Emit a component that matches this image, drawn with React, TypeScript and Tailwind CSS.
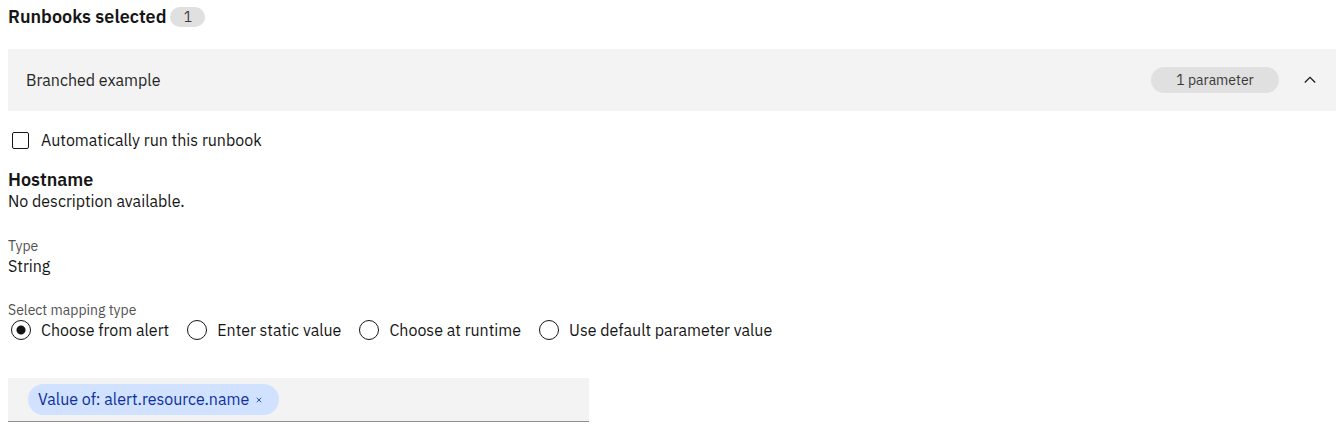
import { useState } from "react";

const mappingTypes = [
  "Choose from alert",
  "Enter static value",
  "Choose at runtime",
  "Use default parameter value",
];

function RadioOption({
  label,
  checked,
  onSelect,
}: {
  label: string;
  checked: boolean;
  onSelect: () => void;
}) {
  return (
    <label className="flex items-center gap-2.5">
      <input
        type="radio"
        name="mapping-type"
        checked={checked}
        onChange={onSelect}
        className="size-5 appearance-none rounded-full border border-[#161616] checked:bg-[radial-gradient(circle,#161616_4px,transparent_5px)]"
      />
      {label}
    </label>
  );
}

function SelectedTag({ text, onRemove }: { text: string; onRemove: () => void }) {
  return (
    <span className="flex h-[31px] items-center gap-1.5 rounded-full bg-[#d0e2ff] pr-4 pl-2.5 text-[#0f2f9e]">
      <span className="pb-0.5">{text}</span>
      <button type="button" aria-label="Remove value" onClick={onRemove}>
        <svg viewBox="0 0 8 8" className="size-2" fill="none" stroke="currentColor" strokeWidth="0.8">
          <path d="M1.75 1.75 6.25 6.25M6.25 1.75 1.75 6.25" />
        </svg>
      </button>
    </span>
  );
}

export default function App() {
  const [expanded, setExpanded] = useState(true);
  const [mapping, setMapping] = useState(mappingTypes[0]);
  const [hasValue, setHasValue] = useState(true);

  return (
    <main className="bg-white px-2 pt-1 font-['IBM_Plex_Sans',Roboto,sans-serif] text-base leading-5 text-[#161616]">
      <header className="flex items-center gap-1">
        <h1 className="text-lg leading-[26px] font-semibold">Runbooks selected</h1>
        <span className="flex h-5 w-[35px] items-center justify-center rounded-full bg-[#e0e0e0] text-sm text-[#393939]">
          1
        </span>
      </header>

      <section className="mt-[19px]">
        <div className="flex h-[62px] items-center bg-[#f3f3f3] pr-4 pl-[18px]">
          <h2 className="flex-1 text-[#262626]">Branched example</h2>
          <span className="flex h-[26px] w-32 items-center justify-center rounded-full bg-[#e0e0e0] text-sm text-[#393939]">
            1 parameter
          </span>
          <button
            type="button"
            aria-label="Toggle runbook details"
            aria-expanded={expanded}
            onClick={() => setExpanded(!expanded)}
            className="ml-[21px]"
          >
            <svg viewBox="0 0 20 20" className="size-5" fill="none" stroke="#161616" strokeWidth="1.2">
              <path d={expanded ? "M4.8 12.5 10 7.3l5.2 5.2" : "M4.8 7.5 10 12.7l5.2-5.2"} />
            </svg>
          </button>
        </div>

        {expanded && (
          <div>
            <label className="mt-[19px] flex items-center gap-3 pl-1">
              <input
                type="checkbox"
                className="size-[17px] appearance-none rounded-xs border border-[#161616] checked:bg-[#161616]"
              />
              Automatically run this runbook
            </label>

            <h3 className="mt-[19px] text-lg leading-[22px] font-semibold">Hostname</h3>
            <p>No description available.</p>

            <dl className="mt-[25px]">
              <dt className="text-sm leading-5 text-[#525252]">Type</dt>
              <dd>String</dd>
            </dl>

            <fieldset className="mt-6">
              <legend className="text-sm leading-5 text-[#525252]">Select mapping type</legend>
              <div className="flex flex-wrap gap-[18px] pl-[3px]">
                {mappingTypes.map((type) => (
                  <RadioOption
                    key={type}
                    label={type}
                    checked={mapping === type}
                    onSelect={() => setMapping(type)}
                  />
                ))}
              </div>
            </fieldset>

            <div className="mt-[38px] flex h-11 w-full max-w-[581px] items-center border-b border-[#8d8d8d] bg-[#f3f3f3] pl-5">
              {hasValue && (
                <SelectedTag text="Value of: alert.resource.name" onRemove={() => setHasValue(false)} />
              )}
            </div>
          </div>
        )}
      </section>
    </main>
  );
}
